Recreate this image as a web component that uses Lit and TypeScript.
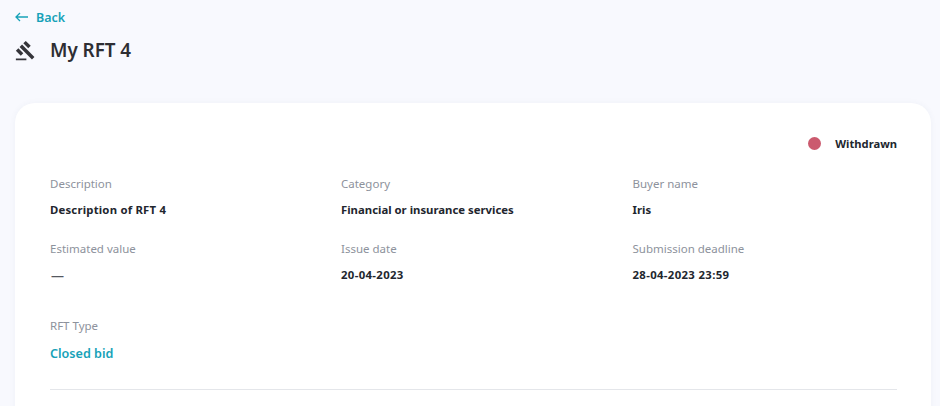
import { LitElement, html, css } from "lit";
import { customElement } from "lit/decorators.js";

const fields: { label: string; value: string; kind?: string }[] = [
  { label: "Description", value: "Description of RFT 4", kind: "loose" },
  { label: "Category", value: "Financial or insurance services" },
  { label: "Buyer name", value: "Iris" },
  { label: "Estimated value", value: "—", kind: "dash" },
  { label: "Issue date", value: "20-04-2023", kind: "num" },
  { label: "Submission deadline", value: "28-04-2023 23:59", kind: "num" },
  { label: "RFT Type", value: "Closed bid", kind: "link" },
];

@customElement("app-root")
export class AppRoot extends LitElement {
  static styles = css`
    :host {
      display: block;
      width: 940px;
      height: 406px;
      overflow: hidden;
      background: #f8f9fe;
      font-family: "Noto Sans", "Open Sans", sans-serif;
      box-sizing: border-box;
      padding: 8px 9px 0 15px;
    }
    .back {
      display: flex;
      align-items: center;
      gap: 8px;
      height: 18px;
      color: #17a2b8;
      font-size: 12.5px;
      font-weight: 600;
    }
    .back svg { display: block; }
    .title {
      display: flex;
      align-items: center;
      gap: 14px;
      margin-top: 10px;
      height: 28px;
    }
    .title svg { display: block; }
    h1 {
      margin: 0;
      font-size: 18.8px;
      font-weight: 600;
      color: #2e2e33;
    }
    .card {
      margin-top: 39px;
      height: 340px;
      background: #fff;
      border-radius: 20px;
      padding: 31px 34px 0 35px;
      box-sizing: border-box;
      box-shadow: 0 0 6px rgba(60, 70, 110, 0.05);
    }
    .status {
      display: flex;
      justify-content: flex-end;
      align-items: center;
      gap: 14px;
      height: 18px;
      font-size: 11.2px;
      font-weight: 700;
      color: #22262e;
    }
    .dot {
      width: 13px;
      height: 13px;
      border-radius: 50%;
      background: #cb5a6e;
    }
    .grid {
      display: grid;
      grid-template-columns: 291px 291.5px 1fr;
      margin-top: 24px;
    }
    .field { height: 64.5px; }
    .field.link { height: 72px; margin-top: 12.5px; }
    .label {
      font-size: 11.5px;
      line-height: 16px;
      color: #8d929c;
    }
    .value {
      margin-top: 10px;
      font-size: 11.35px;
      line-height: 16px;
      font-weight: 700;
      color: #22262e;
    }
    .value.loose { letter-spacing: 0.2px; }
    .value.num { letter-spacing: 0.35px; }
    .value.dash {
      font-size: 13px;
      padding-left: 1px;
      color: #55585f;
    }
    .value.link {
      margin-top: 12px;
      font-size: 12.6px;
      font-weight: 600;
      color: #17a2b8;
    }
    .rule {
      height: 1px;
      background: #e4e6ea;
      margin-top: -1px;
    }
  `;

  render() {
    return html`
      <div class="back">
        <svg width="13" height="10" viewBox="0 0 13 10" fill="none" stroke="#17a2b8" stroke-width="1.3">
          <path d="M13 5H1M5 1 1 5l4 4" />
        </svg>
        <span>Back</span>
      </div>
      <div class="title">
        <svg width="21" height="21" viewBox="0 0 24 24" fill="#35353a">
          <path d="M1 21h12v2H1zM5.245 8.07l2.83-2.827 14.14 14.142-2.828 2.828zM12.317 1l5.657 5.656-2.83 2.83-5.654-5.66zM3.825 9.485l5.657 5.657-2.828 2.828-5.657-5.657z" />
        </svg>
        <h1>My RFT 4</h1>
      </div>
      <div class="card">
        <div class="status"><span class="dot"></span><span>Withdrawn</span></div>
        <div class="grid">
          ${fields.map(
            (f) => html`<div class="field ${f.kind ?? ""}">
              <div class="label">${f.label}</div>
              <div class="value ${f.kind ?? ""}">${f.value}</div>
            </div>`
          )}
        </div>
        <div class="rule"></div>
      </div>
    `;
  }
}
